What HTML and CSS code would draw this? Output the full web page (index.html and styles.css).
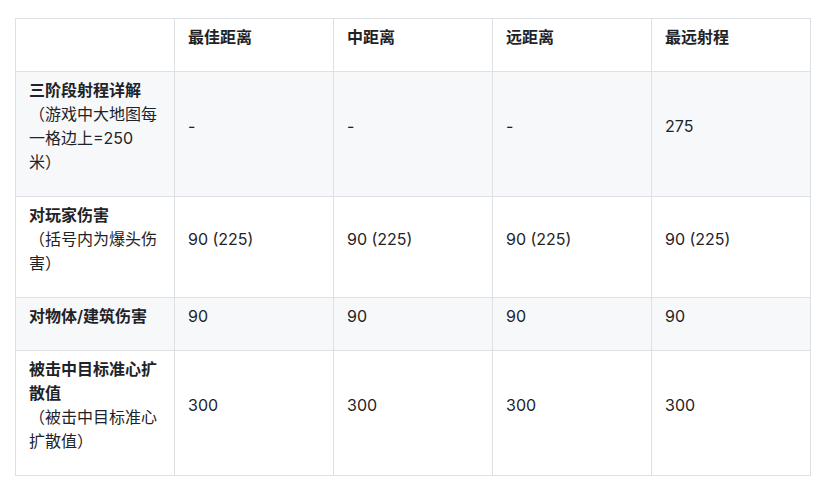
FILE: index.html
```html
<!DOCTYPE html>
<html lang="zh-CN">
<head>
<meta charset="utf-8">
<title>射程与伤害</title>
<link rel="stylesheet" href="styles.css">
</head>
<body>
<table class="data">
  <thead>
    <tr>
      <th class="label"><p class="cell"></p></th>
      <th><p class="cell">最佳距离</p></th>
      <th><p class="cell">中距离</p></th>
      <th><p class="cell">远距离</p></th>
      <th><p class="cell">最远射程</p></th>
    </tr>
  </thead>
  <tbody>
    <tr class="alt">
      <td class="label"><p class="cell"><strong>三阶段射程详解</strong><br>（游戏中大地图每一格边上=250米）</p></td>
      <td><p class="cell">-</p></td>
      <td><p class="cell">-</p></td>
      <td><p class="cell">-</p></td>
      <td><p class="cell">275</p></td>
    </tr>
    <tr>
      <td class="label"><p class="cell"><strong>对玩家伤害</strong><br>（括号内为爆头伤害）</p></td>
      <td><p class="cell">90 (225)</p></td>
      <td><p class="cell">90 (225)</p></td>
      <td><p class="cell">90 (225)</p></td>
      <td><p class="cell">90 (225)</p></td>
    </tr>
    <tr class="alt">
      <td class="label"><p class="cell"><strong>对物体/建筑伤害</strong></p></td>
      <td><p class="cell">90</p></td>
      <td><p class="cell">90</p></td>
      <td><p class="cell">90</p></td>
      <td><p class="cell">90</p></td>
    </tr>
    <tr>
      <td class="label"><p class="cell"><strong>被击中目标准心扩散值</strong><br>（被击中目标准心扩散值）</p></td>
      <td><p class="cell">300</p></td>
      <td><p class="cell">300</p></td>
      <td><p class="cell">300</p></td>
      <td><p class="cell">300</p></td>
    </tr>
  </tbody>
</table>
</body>
</html>
```

FILE: styles.css
```css
html, body {
  margin: 0;
  padding: 0;
  background: #ffffff;
}

body {
  padding: 18px 0 0 15px;
  font-family: "Inter", "Noto Sans CJK SC", sans-serif;
  font-size: 16px;
  line-height: 1.5;
  color: #1f2328;
  text-spacing-trim: space-all;
}

.data {
  width: 796px;
  table-layout: fixed;
  border-collapse: collapse;
  border-spacing: 0;
}

.data th,
.data td {
  border: 1px solid #dde1e6;
  padding: 6px 13px;
  text-align: left;
  vertical-align: middle;
}

.data .label {
  padding-right: 16px;
}

.data th {
  font-weight: 600;
}

.data tr {
  background: #ffffff;
}

.data tr.alt {
  background: #f6f8fa;
}

.cell {
  margin: 0 0 16px 0;
  min-height: 24px;
  text-spacing-trim: space-all;
}

.cell strong {
  font-weight: 600;
}
```
